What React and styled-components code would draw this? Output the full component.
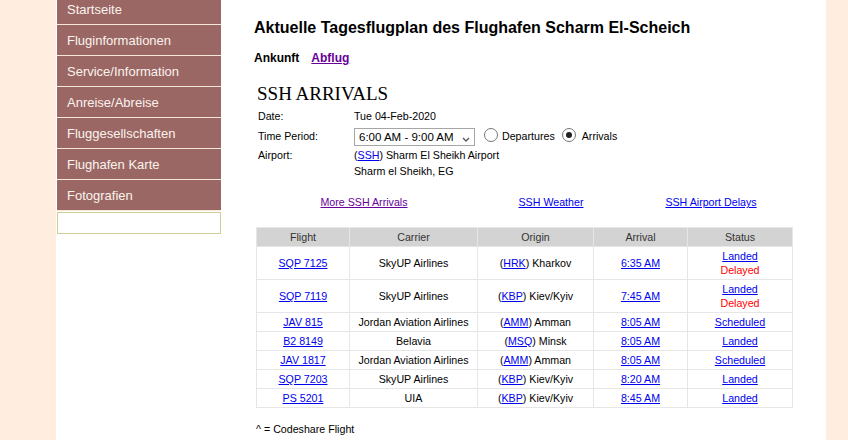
import styled, { createGlobalStyle } from "styled-components"

const GlobalStyle = createGlobalStyle`
  body {
    margin: 0;
    background: #FFEEE0;
    font-family: "Liberation Sans", Arial, sans-serif;
  }
`

const menu = [
  "Startseite",
  "Fluginformationen",
  "Service/Information",
  "Anreise/Abreise",
  "Fluggesellschaften",
  "Flughafen Karte",
  "Fotografien",
]

const flights = [
  { nr: "SQP 7125", carrier: "SkyUP Airlines", code: "HRK", city: "Kharkov", time: "6:35 AM", status: "Landed", delayed: true },
  { nr: "SQP 7119", carrier: "SkyUP Airlines", code: "KBP", city: "Kiev/Kyiv", time: "7:45 AM", status: "Landed", delayed: true },
  { nr: "JAV 815", carrier: "Jordan Aviation Airlines", code: "AMM", city: "Amman", time: "8:05 AM", status: "Scheduled" },
  { nr: "B2 8149", carrier: "Belavia", code: "MSQ", city: "Minsk", time: "8:05 AM", status: "Landed" },
  { nr: "JAV 1817", carrier: "Jordan Aviation Airlines", code: "AMM", city: "Amman", time: "8:05 AM", status: "Scheduled" },
  { nr: "SQP 7203", carrier: "SkyUP Airlines", code: "KBP", city: "Kiev/Kyiv", time: "8:20 AM", status: "Landed" },
  { nr: "PS 5201", carrier: "UIA", code: "KBP", city: "Kiev/Kyiv", time: "8:45 AM", status: "Landed" },
]

export default function App() {
  return (
    <>
      <GlobalStyle />
      <Page>
        <Sidebar>
          {menu.map((m) => (
            <NavItem key={m}>{m}</NavItem>
          ))}
          <SearchBox />
        </Sidebar>

        <Main>
          <Titel>Aktuelle Tagesflugplan des Flughafen Scharm El-Scheich</Titel>
          <Tabs>
            <span>Ankunft</span>
            <Link $visited>Abflug</Link>
          </Tabs>

          <Board>
            <BoardTitle>SSH ARRIVALS</BoardTitle>
            <Info>
              <Label $h={20}>Date:</Label>
              <Value $h={20}>Tue 04-Feb-2020</Value>
              <Label $h={19}>Time Period:</Label>
              <Value $h={19}>
                <SelectBox>
                  6:00 AM - 9:00 AM
                  <svg width="8" height="5" viewBox="0 0 8 5">
                    <path d="M1 1 L4 4 L7 1" fill="none" stroke="#555" strokeWidth="1.3" />
                  </svg>
                </SelectBox>
                <Radio $left={5} />
                <span>Departures</span>
                <Radio $left={3} $checked />
                <Arr>Arrivals</Arr>
              </Value>
              <Label $h={16}>Airport:</Label>
              <Value $h={16}>
                <span>(<Link>SSH</Link>) Sharm El Sheikh Airport</span>
              </Value>
              <Label $h={16} />
              <Value $h={16}>Sharm el Sheikh, EG</Value>
            </Info>

            <LinkRow>
              <Link $visited>More SSH Arrivals</Link>
              <Link>SSH Weather</Link>
              <Link>SSH Airport Delays</Link>
            </LinkRow>

            <Table>
              <colgroup>
                <col style={{ width: 93 }} />
                <col style={{ width: 128 }} />
                <col style={{ width: 116 }} />
                <col style={{ width: 94 }} />
                <col style={{ width: 105 }} />
              </colgroup>
              <thead>
                <tr>
                  <th>Flight</th>
                  <th>Carrier</th>
                  <th>Origin</th>
                  <th>Arrival</th>
                  <th>Status</th>
                </tr>
              </thead>
              <tbody>
                {flights.map((f) => (
                  <tr key={f.nr}>
                    <td><Link>{f.nr}</Link></td>
                    <td>{f.carrier}</td>
                    <td>(<Link>{f.code}</Link>) {f.city}</td>
                    <td><Link>{f.time}</Link></td>
                    <td>
                      <Link>{f.status}</Link>
                      {f.delayed && <Delayed>Delayed</Delayed>}
                    </td>
                  </tr>
                ))}
              </tbody>
            </Table>

            <Note>^ = Codeshare Flight</Note>
          </Board>
        </Main>
      </Page>
    </>
  )
}

const Page = styled.div`
  width: 770px;
  height: 440px;
  margin-left: 56px;
  background: #ffffff;
  display: flex;
  overflow: hidden;
`
const Sidebar = styled.div`
  width: 164px;
  margin: -6px 0 0 1px;
  display: flex;
  flex-direction: column;
`
const NavItem = styled.div`
  height: 30px;
  border-bottom: 1px solid #F5E6DB;
  background: #9A6764;
  color: #FBF3EE;
  font-size: 13px;
  padding-left: 10px;
  display: flex;
  align-items: center;
`
const SearchBox = styled.div`
  height: 20px;
  margin-top: 1px;
  border: 1px solid #CFCF99;
  background: #ffffff;
`
const Main = styled.div`
  margin-left: 33px;
  flex: 1;
  padding-top: 18px;
`
const Titel = styled.h1`
  margin: 0;
  font-size: 16px;
  line-height: 20px;
  font-weight: bold;
  color: #000;
`
const Tabs = styled.div`
  margin-top: 13px;
  display: flex;
  gap: 12px;
  font-size: 12px;
  line-height: 14px;
  font-weight: bold;
`
const Link = styled.a`
  color: ${(p) => (p.$visited ? "#660099" : "#0000EE")};
  text-decoration: underline;
  cursor: pointer;
`
const Board = styled.div`
  margin: 19px 0 0 2px;
  width: 536px;
  font-size: 8pt;
  line-height: 14px;
  color: #000;
`
const BoardTitle = styled.div`
  font-family: "Liberation Serif", "Times New Roman", serif;
  font-size: 19px;
  line-height: 20px;
  padding-left: 1px;
`
const Info = styled.div`
  margin-top: 5px;
  padding-left: 2px;
  display: grid;
  grid-template-columns: 96px 1fr;
`
const Label = styled.div`
  height: ${(p) => p.$h}px;
`
const Value = styled.div`
  height: ${(p) => p.$h}px;
  display: flex;
  align-items: flex-start;
  gap: 4px;
`
const SelectBox = styled.div`
  width: 112px;
  height: 16px;
  margin-top: -1px;
  padding: 0 3px 0 4px;
  border: 1px solid #A6A6A6;
  font-size: 11.5px;
  line-height: 16px;
  display: flex;
  align-items: center;
  justify-content: space-between;

  svg {
    margin-top: 5px;
    margin-right: 1px;
  }
`
const Radio = styled.span`
  width: 12px;
  height: 12px;
  margin-top: -1px;
  border: 1px solid #777;
  border-radius: 50%;
  background: #fff;
  position: relative;
  margin-left: ${(p) => p.$left}px;

  &::after {
    content: "";
    display: ${(p) => (p.$checked ? "block" : "none")};
    position: absolute;
    left: 3px;
    top: 3px;
    width: 6px;
    height: 6px;
    border-radius: 50%;
    background: #222;
  }
`
const Arr = styled.span`
  margin-left: 2px;
`
const LinkRow = styled.div`
  margin-top: 15px;
  display: grid;
  grid-template-columns: 216px 158px 162px;
  text-align: center;
`
const Table = styled.table`
  margin-top: 18px;
  width: 536px;
  border-collapse: collapse;
  table-layout: fixed;
  font-size: 8pt;
  line-height: 14px;

  th {
    background: #D3D3D3;
    color: #333;
    font-weight: normal;
    border: 1px solid #E6E6E6;
    padding: 2px;
    text-align: center;
  }

  td {
    border: 1px solid #E6E6E6;
    padding: 2px;
    text-align: center;
    vertical-align: middle;
  }
`
const Delayed = styled.div`
  color: #FF0000;
`
const Note = styled.div`
  margin-top: 14px;
`
